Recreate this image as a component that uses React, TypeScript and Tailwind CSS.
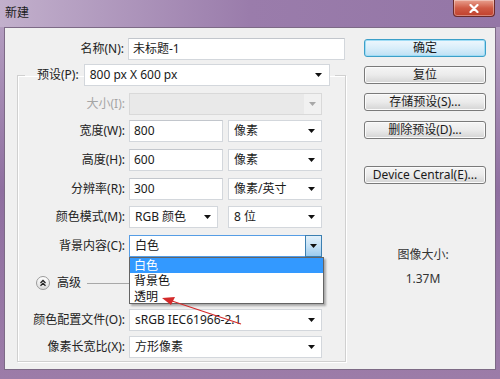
import React from "react";

const FONT = { fontFamily: '"Noto Sans", "Noto Sans CJK SC", sans-serif' };

function Arrow({ color = "#111" }: { color?: string }) {
  return (
    <svg width="7" height="4" viewBox="0 0 7 4" className="block">
      <path d="M0 0 H7 L3.5 4 Z" fill={color} />
    </svg>
  );
}

function Select({
  w,
  text,
  arrowRight = 6,
}: {
  w: string;
  text: string;
  arrowRight?: number;
}) {
  return (
    <div
      className={`${w} h-[22px] bg-white border border-[#d3d7dc] flex items-center justify-between pl-[5px] text-[12px] leading-[14px] text-[#1a1a1a]`}
    >
      <span className="whitespace-nowrap">{text}</span>
      <span style={{ marginRight: arrowRight }}>
        <Arrow />
      </span>
    </div>
  );
}

function Input({ w, text }: { w: string; text: string }) {
  return (
    <div
      className={`${w} h-[22px] bg-white border border-[#d3d7dc] border-t-[#c2c6cc] flex items-center pl-[4px] text-[12px] leading-[14px] text-[#1a1a1a]`}
    >
      {text}
    </div>
  );
}

function Label({ children, disabled }: { children: React.ReactNode; disabled?: boolean }) {
  return (
    <div
      className={`w-[107px] text-right text-[12px] leading-[14px] whitespace-nowrap ${
        disabled ? "text-[#a5a5a5]" : "text-[#222]"
      }`}
    >
      {children}
    </div>
  );
}

function Btn({ children, primary }: { children: React.ReactNode; primary?: boolean }) {
  return (
    <div
      className={`h-[18px] w-[122px] rounded-[3px] border flex items-center justify-center text-[12px] leading-[14px] text-[#1a1a1a] ${
        primary
          ? "border-[#3c9fc8] bg-gradient-to-b from-[#eef7fd] via-[#d9eefa] to-[#bde0f4] shadow-[inset_0_0_0_1px_#9fdcf5]"
          : "border-[#7a7a7a] bg-gradient-to-b from-[#f5f5f5] via-[#ebebeb] to-[#d4d4d4] shadow-[inset_0_0_0_1px_#fbfbfb]"
      }`}
    >
      {children}
    </div>
  );
}

export default function App() {
  return (
    <div
      className="relative w-[500px] h-[379px] overflow-hidden flex flex-col bg-gradient-to-b from-[#b9a4c5] via-[#8f6fa0] to-[#9c7ca8]"
      style={FONT}
    >
      {/* title bar */}
      <div className="h-[27px] flex items-start justify-between bg-gradient-to-r from-[#c2b0cc] via-[#9a7cab] to-[#9476a6]">
        <span className="pl-[5px] pt-[5px] text-[12px] leading-[16px] text-[#1c1c1c]">新建</span>
        <div className="mr-[5px] w-[42px] h-[17px] rounded-b-[4px] border border-t-0 border-[#6b2a2a] bg-gradient-to-b from-[#e8a08f] via-[#cf5a45] to-[#c0402c] flex items-center justify-center shadow-[inset_0_0_0_1px_rgba(255,255,255,0.35)]">
          <svg width="10" height="9" viewBox="0 0 10 9">
            <path d="M1.5 1 L8.5 8 M8.5 1 L1.5 8" stroke="#fff" strokeWidth="2.2" strokeLinecap="round" />
          </svg>
        </div>
      </div>

      {/* body */}
      <div className="flex-1 mx-[4px] mb-[9px] bg-[#f0f0f0] border border-[#7d6a86] flex">
        {/* left column */}
        <div className="pl-[12px] pt-[10px] flex flex-col w-[341px]">
          <div className="flex items-center gap-[4px] h-[22px]">
            <Label>名称(N):</Label>
            <Input w="w-[217px]" text="未标题-1" />
          </div>

          <fieldset className="mt-[4px] w-[329px] border border-[#d0d0d0] shadow-[inset_1px_1px_0_#fff,1px_1px_0_#fff] pb-[3px]">
            <legend className="ml-[7px] pl-[12px] pr-[5px]">
              <div className="flex items-center gap-[5px]">
                <span className="text-[12px] leading-[14px] text-[#222] whitespace-nowrap">预设(P):</span>
                <Select w="w-[246px]" text="800 px X 600 px" arrowRight={7} />
              </div>
            </legend>

            <div className="mt-[7px] flex items-center gap-[4px]">
              <Label disabled>大小(I):</Label>
              <div className="w-[193px] h-[22px] border border-[#d9d9d9] bg-[#e9e9e9] flex justify-end">
                <div className="w-[17px] h-full bg-[#f1f1f1] flex items-center justify-center">
                  <Arrow color="#a8a8a8" />
                </div>
              </div>
            </div>

            <div className="mt-[5px] flex items-center gap-[4px]">
              <Label>宽度(W):</Label>
              <Input w="w-[94px]" text="800" />
              <div className="ml-[1px]">
                <Select w="w-[94px]" text="像素" />
              </div>
            </div>

            <div className="mt-[7px] flex items-center gap-[4px]">
              <Label>高度(H):</Label>
              <Input w="w-[94px]" text="600" />
              <div className="ml-[1px]">
                <Select w="w-[94px]" text="像素" />
              </div>
            </div>

            <div className="mt-[7px] flex items-center gap-[4px]">
              <Label>分辨率(R):</Label>
              <Input w="w-[94px]" text="300" />
              <div className="ml-[1px]">
                <Select w="w-[94px]" text="像素/英寸" />
              </div>
            </div>

            <div className="mt-[6px] flex items-center gap-[4px]">
              <Label>颜色模式(M):</Label>
              <Select w="w-[89px]" text="RGB 颜色" />
              <div className="ml-[6px]">
                <Select w="w-[94px]" text="8 位" />
              </div>
            </div>

            <div className="mt-[7px] flex items-center gap-[4px]">
              <Label>背景内容(C):</Label>
              <div className="relative w-[193px] h-[22px] bg-white border border-[#569de5] flex items-center justify-between pl-[5px] text-[12px] leading-[14px] text-[#1a1a1a]">
                <span>白色</span>
                <div className="w-[17px] h-[22px] -mr-[1px] border border-[#3c7fb1] bg-gradient-to-b from-[#e3f1fb] via-[#c4e1f6] to-[#9ccbee] flex items-center justify-center">
                  <Arrow />
                </div>
                {/* dropdown list */}
                <div className="absolute left-[-1px] top-[21px] w-[195px] h-[47px] bg-white border border-[#646464] shadow-[2px_2px_2px_rgba(0,0,0,0.3)] flex flex-col z-10">
                  <div className="h-[15px] bg-[#3399ff] text-white pl-[4px] text-[12px] leading-[15px]">白色</div>
                  <div className="h-[16px] pl-[4px] text-[12px] leading-[16px] text-[#111]">背景色</div>
                  <div className="h-[15px] pl-[4px] text-[12px] leading-[15px] text-[#111]">透明</div>
                </div>
              </div>
            </div>

            <div className="mt-[19px] h-[14px] flex items-center">
              <div className="ml-[18px] w-[14px] h-[14px] rounded-full border border-[#9a9a9a] bg-gradient-to-b from-[#ffffff] to-[#dcdcdc] flex items-center justify-center">
                <svg width="8" height="8" viewBox="0 0 8 8">
                  <path d="M1.5 4 L4 1.5 L6.5 4 M1.5 6.8 L4 4.3 L6.5 6.8" stroke="#222" strokeWidth="1.3" fill="none" />
                </svg>
              </div>
              <span className="ml-[7px] text-[12px] leading-[14px] text-[#222]">高级</span>
              <div className="ml-[6px] w-[50px] h-[1px] bg-[#a8a8a8]" />
            </div>

            <div className="mt-[19px] flex items-center gap-[4px]">
              <Label>颜色配置文件(O):</Label>
              <Select w="w-[193px]" text="sRGB IEC61966-2.1" />
            </div>

            <div className="mt-[5px] flex items-center gap-[4px]">
              <Label>像素长宽比(X):</Label>
              <Select w="w-[193px]" text="方形像素" />
            </div>
          </fieldset>
        </div>

        {/* right column */}
        <div className="ml-[18px] pt-[11px] flex flex-col w-[122px]">
          <Btn primary>确定</Btn>
          <div className="mt-[9px]"><Btn>复位</Btn></div>
          <div className="mt-[9px]"><Btn>存储预设(S)...</Btn></div>
          <div className="mt-[10px]"><Btn>删除预设(D)...</Btn></div>
          <div className="mt-[27px]"><Btn>Device Central(E)...</Btn></div>
          <div className="mt-[63px] pr-[4px] text-center text-[12px] leading-[16px] text-[#333]">图像大小:</div>
          <div className="mt-[8px] pr-[4px] text-center text-[12px] leading-[16px] text-[#333]">1.37M</div>
        </div>
      </div>

      {/* red annotation arrow */}
      <svg className="absolute left-0 top-0 pointer-events-none z-20" width="500" height="379" viewBox="0 0 500 379">
        <line x1="172" y1="301" x2="241" y2="324" stroke="#d42a2a" strokeWidth="1.2" />
        <path d="M162 298 L175 297 L171 305 Z" fill="#d42a2a" />
      </svg>
    </div>
  );
}
